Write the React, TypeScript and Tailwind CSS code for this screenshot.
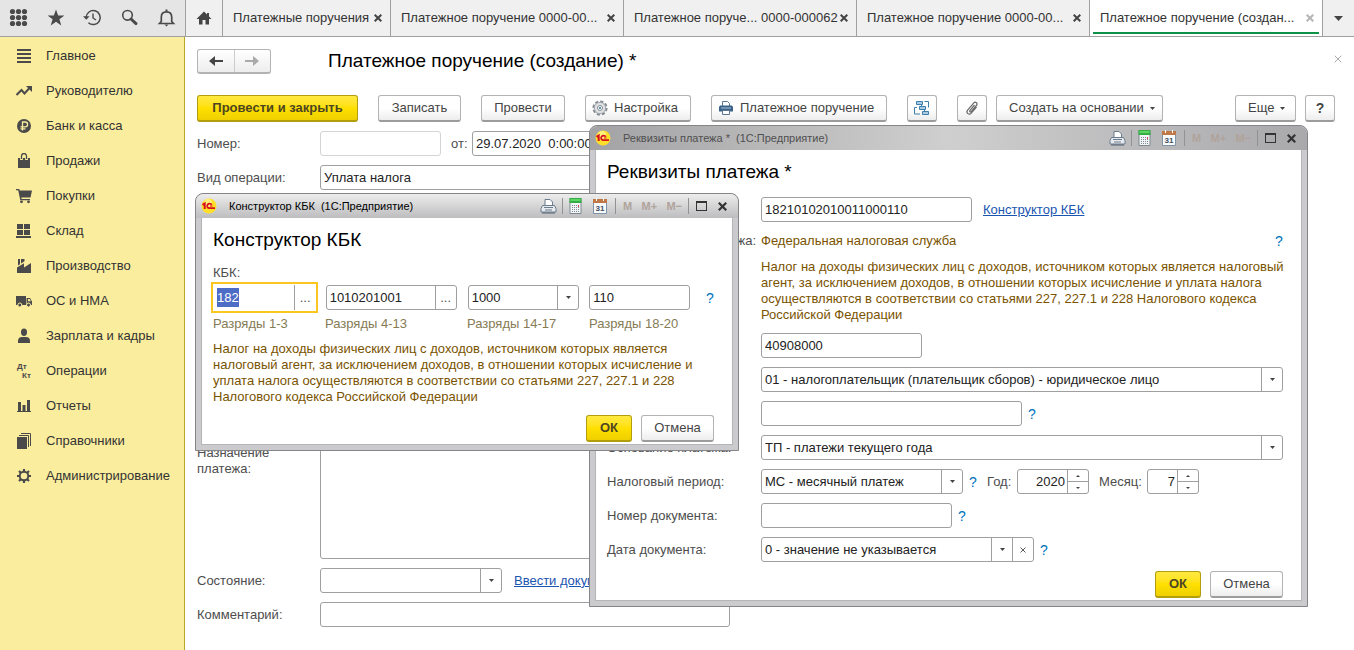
import { ReactNode } from "react";
import clsx from "clsx";

const TABS = [
  { title: "Платежные поручения", width: "w-[168px]" },
  { title: "Платежное поручение 0000-00...", width: "w-[233px]" },
  { title: "Платежное поруче... 0000-000062", width: "w-[233px]" },
  { title: "Платежное поручение 0000-00...", width: "w-[233px]" },
  { title: "Платежное поручение (создан...", width: "w-[233px]", active: true },
];

const Icon = ({ size = 16, children }: { size?: number; children: ReactNode }) => (
  <svg width={size} height={size} viewBox={`0 0 ${size} ${size}`} fill="currentColor" className="shrink-0" aria-hidden="true">
    {children}
  </svg>
);

const stroke = { fill: "none", stroke: "currentColor" };

const TOOL_ICONS = [
  {
    title: "Разделы",
    icon: (
      <Icon size={20}>
        {[3.5, 9.5, 15.5].map((y) => [3.5, 9.5, 15.5].map((x) => <circle key={`${x}-${y}`} cx={x} cy={y} r="2.6" />))}
      </Icon>
    ),
  },
  {
    title: "Избранное",
    icon: (
      <Icon size={20}>
        <path d="M10 1.5l2.2 6h6.2l-5 3.8 1.9 6.2-5.3-3.8-5.3 3.8 1.9-6.2-5-3.8h6.2z" />
      </Icon>
    ),
  },
  {
    title: "История",
    icon: (
      <Icon size={20}>
        <path d="M3.2 9.5a7 7 0 1 1 2.2 5.2" strokeWidth="1.5" {...stroke} />
        <path d="M0 8.3h6.6l-3.300 3.500z" />
        <path d="M10 5.5v4.5l3 2" strokeWidth="1.400" {...stroke} />
      </Icon>
    ),
  },
  {
    title: "Поиск",
    icon: (
      <Icon size={20}>
        <circle cx="7.500" cy="7.3" r="4.8" strokeWidth="1.6" {...stroke} />
        <path d="M11 11l5 4.6" strokeWidth="3" strokeLinecap="round" {...stroke} />
      </Icon>
    ),
  },
  {
    title: "Оповещения",
    icon: (
      <Icon size={20}>
        <path d="M4.3 13.5V9c0-3 2-5.2 5.2-5.2s5.2 2.2 5.2 5.2v4.5l1.8 2h-14z" strokeWidth="1.7" {...stroke} />
        <path d="M8.5 1.5h2v2h-2zM7.500 16.500h4l-2 2z" />
      </Icon>
    ),
  },
];

const SECTIONS = [
  { title: "Главное", icon: <path d="M1 1h14v2H1zM1 5h14v2H1zM1 9h14v2H1zM1 13h14v2H1z" /> },
  {
    title: "Руководителю",
    icon: (
      <>
        <path d="M0.5 12l5-5 3 3.5L13.5 5" strokeWidth="2" {...stroke} />
        <path d="M10 3h6v6z" />
      </>
    ),
  },
  {
    title: "Банк и касса",
    icon: (
      <>
        <circle cx="8" cy="8" r="7" />
        <path d="M6.5 12.5v-8.5h2.7a2.3 2.3 0 0 1 0 4.8H4.5M4.5 10.8h5" fill="none" stroke="#fbed9e" strokeWidth="1.3" />
      </>
    ),
  },
  {
    title: "Продажи",
    icon: (
      <>
        <path d="M2 5h12v10H2z" />
        <path d="M5.5 7V3.500a2.500 2.500 0 0 1 5 0V7" stroke="#fbed9e" strokeWidth="2.8" fill="none" />
        <path d="M5.500 6V3a2.500 2.500 0 0 1 5 0V6" strokeWidth="1.300" {...stroke} />
      </>
    ),
  },
  {
    title: "Покупки",
    icon: (
      <>
        <path d="M0 1h3.2l.6 1.5H16l-1.5 7H5.3l.3 1.5H14v1.3H4.3L2.2 2.3H0z" />
        <circle cx="5.5" cy="13.8" r="1.4" />
        <circle cx="12.5" cy="13.8" r="1.4" />
      </>
    ),
  },
  { title: "Склад", icon: <path d="M1 1h6v5H1zM8 1h6v5H8zM1 7h6v5H1zM8 7h6v5H8zM0 13h15v2H0z" /> },
  { title: "Производство", icon: <path d="M1 15V9.500L8 5.200V9.500L15 5v10zM2 7.500V1h2v5.300zM5 5.600V1h3.500v2.300z" /> },
  {
    title: "ОС и НМА",
    icon: (
      <>
        <path d="M0 3h10v9H0zM10.6 5H14l2 3.5V12h-5.4z" />
        <path d="M12 6h1.7l1.1 2.2H12z" fill="#fbed9e" />
        <circle cx="3.8" cy="12" r="2" stroke="#fbed9e" />
        <circle cx="12.5" cy="12" r="2" stroke="#fbed9e" />
      </>
    ),
  },
  {
    title: "Зарплата и кадры",
    icon: (
      <>
        <ellipse cx="8" cy="4.2" rx="3" ry="3.7" />
        <path d="M2 15v-2.5C2 10 4 9 6 9h4c2 0 4 1 4 3.5V15z" />
      </>
    ),
  },
  {
    title: "Операции",
    icon: (
      <g fontFamily="Liberation Sans, sans-serif" fontWeight="bold" fontSize="8">
        <text x="1" y="6">Дт</text>
        <text x="6" y="15">Кт</text>
      </g>
    ),
  },
  { title: "Отчеты", icon: <path d="M2 4h3v9H2zM6.500 7h3v6h-3zM11 2h3v11h-3zM1 13h14v1H1z" /> },
  {
    title: "Справочники",
    icon: (
      <>
        <path d="M1 4h10v12H1z" />
        <path d="M3 2.500h9.500V14M5 0.500h9.500V13" strokeWidth="1" {...stroke} />
      </>
    ),
  },
  {
    title: "Администрирование",
    icon: (
      <>
        <circle cx="8" cy="8" r="4.300" strokeWidth="2" {...stroke} />
        <path
          d="M8 1v2.500M8 12.500V15M1 8h2.500M12.500 8H15M3 3l1.800 1.800M11.200 11.200L13 13M3 13l1.800-1.800M11.200 4.800L13 3"
          strokeWidth="2.200"
          {...stroke}
        />
      </>
    ),
  },
];

const Caret = () => (
  <svg width="5" height="3" viewBox="0 0 5 3" fill="#444" aria-hidden="true">
    <path d="M0 0h5L2.500 3z" />
  </svg>
);

const Cross = ({ size = 8, width = 2 }: { size?: number; width?: number }) => (
  <svg width={size} height={size} viewBox="0 0 8 8" aria-hidden="true">
    <path d="M0.700 0.700l6.600 6.600M7.300 0.700L0.700 7.300" strokeWidth={width} {...stroke} />
  </svg>
);

const LogoIcon = () => (
  <svg width="16" height="16" viewBox="0 0 16 16" className="shrink-0" aria-hidden="true">
    <circle cx="8" cy="8" r="7.500" fill="#ffdf2a" />
    <circle cx="7" cy="5" r="4" fill="#fff27a" />
    <path d="M1.500 6.800L3.700 5.500V11" fill="none" stroke="#d8101c" strokeWidth="2" />
    <path d="M10.800 6.800a2.500 2.300 0 1 0-2.300 3.400h5.500" fill="none" stroke="#d8101c" strokeWidth="1.700" />
    <path d="M9 8h2.500" fill="none" stroke="#d8101c" strokeWidth="1" />
  </svg>
);

const PrinterIcon = () => (
  <svg width="16" height="16" viewBox="0 0 16 16" className="shrink-0" aria-hidden="true">
    <path d="M4.500 6V1.500h5l2 2V6" fill="#fff" stroke="#5b7590" />
    <path d="M2 5.500h12l1 1.500v4.500H1V7z" fill="#3a6288" />
    <path d="M3 8h10" stroke="#a9c4dc" />
    <path d="M4.500 10.500h7v4h-7z" fill="#fff" stroke="#5b7590" />
  </svg>
);

const GearIcon = () => (
  <svg width="16" height="16" viewBox="0 0 16 16" className="shrink-0" aria-hidden="true">
    <circle cx="8" cy="8" r="6.600" fill="#dfe3e6" stroke="#858b90" strokeWidth="2" strokeDasharray="3.200 1.984" />
    <circle cx="8" cy="8" r="5.600" fill="#dfe3e6" stroke="#9aa0a5" strokeWidth=".8" />
    <circle cx="8" cy="8" r="2.500" fill="#fff" stroke="#858b90" />
    <circle cx="8" cy="8" r="1.100" fill="#3c7596" />
  </svg>
);

const StructureIcon = () => (
  <svg width="16" height="16" viewBox="0 0 16 16" aria-hidden="true">
    <g fill="#a8cae4" stroke="#3f7fae">
      <path d="M2.500 1.500h6v3h-6zM5.500 6.500h6v3h-6zM8.500 11.500h6v3h-6z" />
    </g>
    <path d="M3 7.500H.5v6.500H6M10.500 1.500h4v6M7.500 4.500v2M10.500 9.500v2" fill="none" stroke="#3f7fae" />
  </svg>
);

const ClipIcon = () => (
  <svg width="16" height="16" viewBox="0 0 16 16" fill="none" stroke="#6b6b6b" strokeWidth="1.200" aria-hidden="true">
    <path d="M10.500 5L6 10.300c-1 1.200.4 2.300 1.400 1.200l5-6c1.800-2.200-.9-4.500-2.800-2.300l-6 7c-2 2.600 1.300 5.500 3.600 2.900L12.500 7" />
  </svg>
);

const TextBox = ({ id, value = "", className }: { id: string; value?: string; className: string }) => (
  <input
    id={id}
    defaultValue={value}
    className={clsx("h-[25px] min-w-0 rounded-[3px] border bg-white px-[3px] text-[#222]", className)}
  />
);

// Drop-down list with its own arrow button
const Combo = ({ id, value = "", className, clearable }: { id: string; value?: string; className: string; clearable?: boolean }) => (
  <div className={clsx("flex h-[25px] rounded-[3px] border border-[#9f9f9f] bg-white text-[#222]", className)}>
    <select id={id} className="min-w-0 flex-1 appearance-none px-[3px] outline-none">
      <option>{value}</option>
    </select>
    <button type="button" aria-label="Открыть список" className="flex w-[21px] items-center justify-center border-l border-[#9f9f9f]">
      <Caret />
    </button>
    {clearable && (
      <button type="button" aria-label="Очистить" className="flex w-[21px] items-center justify-center border-l border-[#9f9f9f] text-[#555]">
        <Cross size={6} width={1.3} />
      </button>
    )}
  </div>
);

const Spinner = ({ id, value, className }: { id: string; value: string; className: string }) => (
  <div className={clsx("flex h-[25px] rounded-[3px] border border-[#9f9f9f] bg-white text-[#222]", className)}>
    <input id={id} defaultValue={value} className="min-w-0 flex-1 px-[2px] text-right" />
    <div className="flex w-[21px] flex-col border-l border-[#9f9f9f]">
      <button type="button" aria-label="Больше" className="flex flex-1 items-center justify-center border-b border-[#9f9f9f]">
        <svg width="4" height="2" viewBox="0 0 4 2" fill="#444"><path d="M2 0l2 2H0z" /></svg>
      </button>
      <button type="button" aria-label="Меньше" className="flex flex-1 items-center justify-center">
        <svg width="4" height="2" viewBox="0 0 4 2" fill="#444"><path d="M0 0h4L2 2z" /></svg>
      </button>
    </div>
  </div>
);

const Button = ({ primary, label, className, children }: { primary?: boolean; label?: string; className: string; children: ReactNode }) => (
  <button
    type="button"
    aria-label={label}
    className={clsx(
      "flex h-[27px] shrink-0 items-center rounded-[3px] border border-b-2 whitespace-nowrap",
      primary
        ? "border-[#b29d0c] bg-linear-to-b from-[#ffe93f] via-[#ffe000] to-[#eed000] font-bold text-[#4d4522]"
        : "border-[#b3b3b3] border-b-[#9c9c9c] bg-linear-to-b from-white from-50% to-[#ededed] text-[#444]",
      className
    )}
  >
    {children}
  </button>
);

const Help = () => (
  <button type="button" className="w-2 text-sm text-[#0072bc]">?</button>
);

const TitleTools = () => (
  <div className="flex h-full items-center">
    <button type="button" aria-label="Печать">
      <svg width="17" height="16" viewBox="0 0 17 16" aria-hidden="true">
        <path d="M5 8V1.500h5l2.500 2.500v4" fill="#fff" stroke="#6b7c8c" />
        <path d="M2.500 7.500h12l1.500 3v3.500H1v-3.500z" fill="#e6eaee" stroke="#6b7c8c" />
        <path d="M4 9.500h9M5 12h7" stroke="#6b7c8c" />
        <path d="M2 15h13" stroke="#53616e" />
      </svg>
    </button>
    <span className="ml-[5px] h-4 w-px bg-[#929294]" />
    <button type="button" aria-label="Калькулятор" className="ml-[6px]">
      <svg width="13" height="16" viewBox="0 0 13 16" aria-hidden="true">
        <path d="M1 .5h11v15H1z" fill="#f2f4f6" stroke="#7d8a92" />
        <path d="M.5 0h12v5H.5z" fill="#35ad47" />
        <path d="M1.500 1h10v2h-10z" fill="#5ed462" />
        <path d="M3 7.500h7M3 9.500h7M3 11.500h7M3 13.500h7" stroke="#7c8a94" strokeDasharray="1 1" />
        <path d="M9 7h1v2H9z" fill="#d8444c" />
      </svg>
    </button>
    <button type="button" aria-label="Календарь" className="ml-[11px]">
      <svg width="14" height="16" viewBox="0 0 14 16" aria-hidden="true">
        <path d="M.5 1.500h13v14H.5z" fill="#f8fafc" stroke="#7e92a8" />
        <path d="M0 1h14v4H0z" fill="#c07846" />
        <path d="M3.500 0v3M10.500 0v3" stroke="#fff" />
        <text x="7" y="13" textAnchor="middle" fontSize="8" fontWeight="bold" fontFamily="Liberation Sans, sans-serif" fill="#3f4f60">31</text>
      </svg>
    </button>
    <span className="ml-2 h-4 w-px bg-[#929294]" />
    <div className="ml-[7px] flex w-[59px] items-center justify-between text-[11px] font-bold text-[#b0a39b]">
      <button type="button">M</button>
      <button type="button">M+</button>
      <button type="button">M−</button>
    </div>
    <span className="ml-[6px] h-4 w-px bg-[#929294]" />
    <button type="button" aria-label="Развернуть" className="ml-[7px] h-[10px] w-[11px] border border-t-2 border-[#333]" />
    <button type="button" aria-label="Закрыть" className="ml-[11px] text-[#333]">
      <Cross size={9} />
    </button>
  </div>
);

const Window = ({ title, active, className, children }: { title: string; active?: boolean; className: string; children: ReactNode }) => (
  <section
    className={clsx(
      "absolute flex flex-col rounded-t-lg border border-[#858587] bg-[#cbcbcd] px-[5px] pb-[5px]",
      className
    )}
  >
    <header
      className={clsx(
        "-mx-[5px] flex h-6 shrink-0 items-center rounded-t-lg pr-[11px] pl-[5px] text-[11px]",
        active
          ? "bg-linear-to-b from-[#ededed] to-[#bdbdbf] text-black"
          : "bg-linear-to-r from-[#a3a3a5] via-[#cfcfcf] to-[#a9a9ac] text-[#4f4f4f]"
      )}
    >
      <LogoIcon />
      <span className="ml-3 flex-1 whitespace-pre">{title}</span>
      <TitleTools />
    </header>
    <div className="flex-1 border border-t-0 border-[#b5b5b7] bg-white pr-[18px] pl-[11px]">{children}</div>
  </section>
);

const Heading = ({ children }: { children: ReactNode }) => (
  <h2 className="pt-[10px] text-[19px] leading-6 whitespace-nowrap text-black">{children}</h2>
);

const Row = ({ id, label, children }: { id: string; label: string; children: ReactNode }) => (
  <div className="flex h-[25px] items-center">
    <label htmlFor={id} className="w-[154px] shrink-0">{label}</label>
    {children}
  </div>
);

const TopBar = () => (
  <div className="flex h-[37px] shrink-0 border-b border-[#a0a0a0] bg-[#f0f0f0] text-[#444]">
    <div className="flex w-[185px] shrink-0 items-center gap-[17px] bg-[#e5e5e5] pl-[9px]">
      {TOOL_ICONS.map((tool) => (
        <button key={tool.title} type="button" aria-label={tool.title} className="text-[#4a4a4a]">{tool.icon}</button>
      ))}
    </div>
    <button type="button" aria-label="Начальная страница" className="flex w-[37px] shrink-0 items-center justify-center border-l border-[#a0a0a0]">
      <Icon>
        <path d="M8 1.500L.5 9H3v5.500h3.500V10h3v4.500H13V9h2.500L13 6.500V3h-2v1.500z" />
      </Icon>
    </button>
    {TABS.map((tab, index) => (
      <div
        key={`${tab.title}-${index}`}
        className={clsx("relative flex min-w-0 items-center border-l border-[#a0a0a0] pr-2 pl-[10px]", tab.width, tab.active && "bg-white")}
      >
        <a href="#" className="flex-1 overflow-hidden whitespace-nowrap text-[#333]">{tab.title}</a>
        <button type="button" aria-label="Закрыть" className={tab.active ? "text-[#b5b5b5]" : "text-[#444]"}>
          <Cross />
        </button>
        {tab.active && <span className="absolute inset-x-[3px] bottom-[2px] h-[2px] bg-[#0c9347]" />}
      </div>
    ))}
    <button type="button" aria-label="Все вкладки" className="flex flex-1 items-center justify-center border-l border-[#a0a0a0]">
      <svg width="9" height="5" viewBox="0 0 9 5" fill="#444"><path d="M0 0h9L4.500 5z" /></svg>
    </button>
  </div>
);

const Sidebar = () => (
  <nav className="w-[185px] shrink-0 border-r border-[#b9a72a] bg-[#fbed9e] pt-px">
    {SECTIONS.map((section) => (
      <a key={section.title} href="#" className="flex h-[35px] items-center gap-[14px] pl-4 whitespace-nowrap text-[#333]">
        <span className="text-[#4a4a4a]"><Icon>{section.icon}</Icon></span>
        {section.title}
      </a>
    ))}
  </nav>
);

const Document = () => (
  <main className="min-w-0 flex-1 px-3 pt-3">
    <div className="flex h-[25px] items-center">
      <div className="flex h-[25px] w-[74px] rounded-[3px] border border-b-2 border-[#b3b3b3] bg-linear-to-b from-white to-[#ededed]">
        <button type="button" aria-label="Назад" className="flex flex-1 items-center justify-center border-r border-[#ccc] text-[#444]">
          <svg width="14" height="10" viewBox="0 0 14 10" fill="currentColor"><path d="M0 5l6-5v4h8v2H6v4z" /></svg>
        </button>
        <button type="button" aria-label="Вперед" className="flex flex-1 items-center justify-center text-[#aaa]">
          <svg width="14" height="10" viewBox="0 0 14 10" fill="currentColor"><path d="M14 5L8 0v4H0v2h8v4z" /></svg>
        </button>
      </div>
      <h1 className="ml-[57px] flex-1 text-[19px] whitespace-nowrap text-black">Платежное поручение (создание) *</h1>
      <button type="button" aria-label="Закрыть" className="mb-[6px] text-[#aaa]"><Cross width={1} /></button>
    </div>

    <div className="mt-[21px] mr-[7px] flex">
      <Button primary className="w-[161px] justify-center">Провести и закрыть</Button>
      <Button className="ml-5 w-[83px] justify-center">Записать</Button>
      <Button className="ml-5 w-[84px] justify-center">Провести</Button>
      <Button className="ml-5 w-[106px] gap-[6px] pl-[6px]"><GearIcon />Настройка</Button>
      <Button className="ml-5 w-[176px] gap-[6px] pl-[6px]"><PrinterIcon />Платежное поручение</Button>
      <Button label="Структура подчиненности" className="ml-5 w-[30px] justify-center"><StructureIcon /></Button>
      <Button label="Присоединенные файлы" className="ml-5 w-[30px] justify-center"><ClipIcon /></Button>
      <Button className="ml-[9px] w-[167px] gap-[6px] pl-3">Создать на основании<Caret /></Button>
      <Button className="ml-auto w-[61px] gap-[6px] pl-3">Еще<Caret /></Button>
      <Button className="ml-[9px] w-[30px] justify-center text-sm font-bold">?</Button>
    </div>

    <div className="mt-[9px] grid grid-cols-[123px_1fr] items-center gap-y-[9px]">
      <label htmlFor="number">Номер:</label>
      <div className="flex items-center">
        <TextBox id="number" className="w-[121px] border-[#d4d4d4]" />
        <label htmlFor="date" className="ml-[10px] w-[21px]">от:</label>
        <TextBox id="date" value="29.07.2020  0:00:00" className="w-40 border-[#9f9f9f] whitespace-pre" />
      </div>
      <label htmlFor="operation">Вид операции:</label>
      <TextBox id="operation" value="Уплата налога" className="w-[410px] border-[#9f9f9f]" />
      <label htmlFor="purpose" className="self-start pt-[246px] leading-4">Назначение<br />платежа:</label>
      <textarea id="purpose" className="h-[360px] w-[410px] resize-none rounded-[3px] border border-[#9f9f9f]" />
      <label htmlFor="state">Состояние:</label>
      <div className="flex items-center">
        <Combo id="state" className="w-[182px]" />
        <a href="#" className="ml-3 whitespace-nowrap text-[#1a55b0] underline">Ввести документ</a>
      </div>
      <label htmlFor="comment">Комментарий:</label>
      <TextBox id="comment" className="w-[410px] border-[#9f9f9f]" />
    </div>
  </main>
);

const PaymentWindow = () => (
  <Window title={"Реквизиты платежа *  (1С:Предприятие)"} className="top-[125px] left-[589px] h-[482px] w-[719px]">
    <Heading>Реквизиты платежа *</Heading>
    <div className="mt-[13px] flex flex-col gap-[9px]">
      <div className="flex h-[25px] items-center pl-[154px]">
        <TextBox id="kbk" value="18210102010011000110" className="w-[211px] border-[#9f9f9f]" />
        <a href="#" className="ml-[11px] text-[#1a55b0] underline">Конструктор КБК</a>
      </div>
      <div className="-mt-[3px] flex h-[25px] items-center">
        <span className="w-[154px] pr-[5px] text-right">платежа:</span>
        <span className="flex-1 text-[#7a5300]">Федеральная налоговая служба</span>
        <Help />
      </div>
      <p className="-mt-[3px] h-[65px] pl-[154px] leading-4 whitespace-nowrap text-[#7a5300]">
        Налог на доходы физических лиц с доходов, источником которых является налоговый<br />
        агент, за исключением доходов, в отношении которых исчисление и уплата налога<br />
        осуществляются в соответствии со статьями 227, 227.1 и 228 Налогового кодекса<br />
        Российской Федерации
      </p>
      <div className="flex pl-[154px]">
        <TextBox id="oktmo" value="40908000" className="w-[161px] border-[#9f9f9f]" />
      </div>
      <div className="flex pl-[154px]">
        <Combo id="payer" value="01 - налогоплательщик (плательщик сборов) - юридическое лицо" className="flex-1" />
      </div>
      <div className="flex items-center gap-[6px] pl-[154px]">
        <TextBox id="uin" className="w-[261px] border-[#9f9f9f]" />
        <Help />
      </div>
      <Row id="basis" label="Основание платежа:">
        <Combo id="basis" value="ТП - платежи текущего года" className="flex-1" />
      </Row>
      <Row id="period" label="Налоговый период:">
        <Combo id="period" value="МС - месячный платеж" className="mr-[6px] w-[202px]" />
        <Help />
        <label htmlFor="year" className="ml-[10px] w-[30px]">Год:</label>
        <Spinner id="year" value="2020" className="w-[72px]" />
        <label htmlFor="month" className="ml-[10px] w-[48px]">Месяц:</label>
        <Spinner id="month" value="7" className="w-[52px]" />
      </Row>
      <Row id="docnumber" label="Номер документа:">
        <TextBox id="docnumber" className="mr-[6px] w-[191px] border-[#9f9f9f]" />
        <Help />
      </Row>
      <Row id="docdate" label="Дата документа:">
        <Combo id="docdate" value="0 - значение не указывается" className="mr-[6px] w-[273px]" clearable />
        <Help />
      </Row>
      <div className="flex justify-end gap-[9px]">
        <Button primary className="w-[46px] justify-center">ОК</Button>
        <Button className="w-[73px] justify-center">Отмена</Button>
      </div>
    </div>
  </Window>
);

const KbkWindow = () => (
  <Window active title={"Конструктор КБК  (1С:Предприятие)"} className="top-[193px] left-[195px] h-[258px] w-[544px]">
    <Heading>Конструктор КБК</Heading>
    <label htmlFor="part1" className="mt-[13px] block leading-4">КБК:</label>
    <div className="mt-px flex text-[#222]">
      <div className="-ml-[2px] flex h-[31px] w-[107px] border-2 border-[#f9c71d] bg-white">
        <div className="flex flex-1 items-center pl-1">
          <input id="part1" defaultValue="182" className="field-sizing-content bg-[#4d6cc6] text-white" />
        </div>
        <button type="button" className="my-px w-[22px] border-l border-[#9f9f9f] text-[#555]">...</button>
      </div>
      <div className="mt-[3px] ml-2 flex h-[25px] w-[131px] rounded-[3px] border border-[#9f9f9f]">
        <input aria-label="Разряды 4-13" defaultValue="1010201001" className="min-w-0 flex-1 px-[3px]" />
        <button type="button" className="w-[21px] border-l border-[#9f9f9f] text-[#555]">...</button>
      </div>
      <Combo id="part3" value="1000" className="mt-[3px] ml-[11px] w-[112px]" />
      <TextBox id="part4" value="110" className="mt-[3px] ml-[10px] w-[101px] border-[#9f9f9f]" />
      <div className="ml-4 flex items-center"><Help /></div>
    </div>
    <div className="mt-[3px] flex leading-4 text-[#857b55]">
      <span className="w-[112px]">Разряды 1-3</span>
      <span className="w-[142px]">Разряды 4-13</span>
      <label htmlFor="part3" className="w-[122px]">Разряды 14-17</label>
      <label htmlFor="part4">Разряды 18-20</label>
    </div>
    <p className="mt-[9px] leading-4 whitespace-nowrap text-[#7a5300]">
      Налог на доходы физических лиц с доходов, источником которых является<br />
      налоговый агент, за исключением доходов, в отношении которых исчисление и<br />
      уплата налога осуществляются в соответствии со статьями 227, 227.1 и 228<br />
      Налогового кодекса Российской Федерации
    </p>
    <div className="mt-[10px] flex justify-end gap-[9px]">
      <Button primary className="w-[46px] justify-center">ОК</Button>
      <Button className="w-[73px] justify-center">Отмена</Button>
    </div>
  </Window>
);

function App() {
  return (
    <div className="relative flex min-h-screen flex-col overflow-hidden bg-white font-['Liberation_Sans',Arial,sans-serif] text-[13px] text-[#4d4d4d]">
      <TopBar />
      <div className="flex flex-1">
        <Sidebar />
        <Document />
      </div>
      <PaymentWindow />
      <KbkWindow />
    </div>
  );
}

export default App;
